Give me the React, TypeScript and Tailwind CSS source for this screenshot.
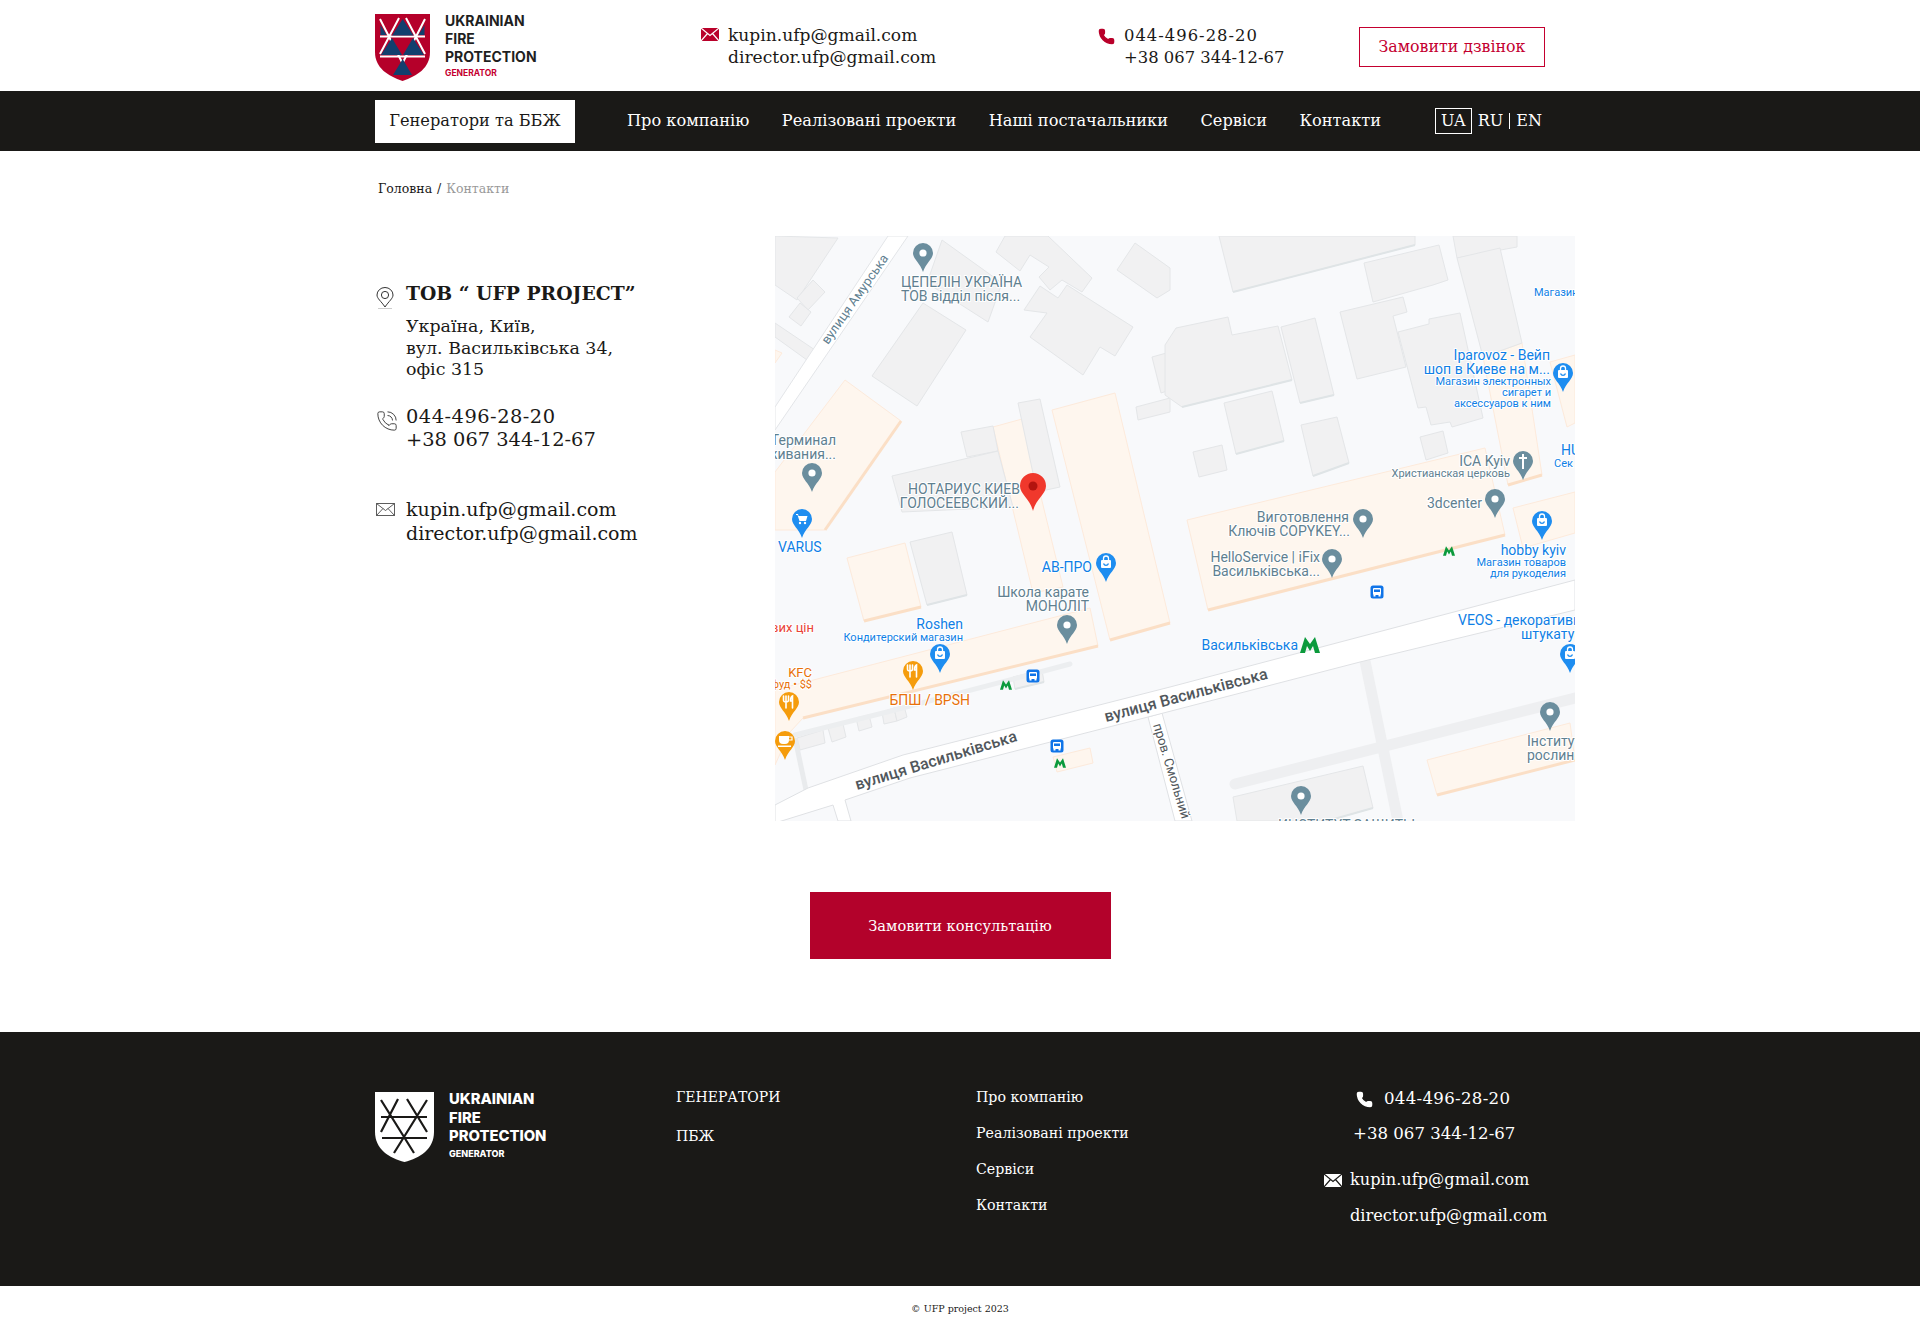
import { Phone, PhoneCall } from 'lucide-react';

const serif = 'font-["DejaVu_Serif",serif]';

type Label = [string, number, number, 'start' | 'end', number, string];

const GRAY = '#5f8090';
const BLUE = '#0f7fe6';
const ORANGE = '#e8710a';

const buildings = [
  '775,236 838,238 797,300 775,285',
  '797,298 813,280 825,292 808,310',
  '789,317 800,303 811,312 801,326',
  '775,323 815,350 807,360 775,337',
  '923,303 966,330 917,406 872,376',
  '942,240 1002,283 988,322 927,283',
  '1005,236 1048,236 1092,278 1082,292 1062,280 1050,290 1039,277 1049,267 1030,255 1020,271 996,252',
  '1135,243 1170,268 1170,290 1157,298 1117,270',
  '1067,285 1133,327 1115,356 1100,347 1083,375 1030,337 1047,313 1024,310 1040,286 1058,298',
  '1152,357 1170,352 1170,390 1161,393',
  '1136,407 1170,398 1170,412 1138,420',
  '1018,403 1040,399 1060,487 1037,492',
  '961,432 993,426 998,451 967,457',
  '892,476 998,451 1013,507 902,512',
  '1219,236 1415,236 1415,245 1233,292',
  '1364,263 1439,245 1448,280 1433,285 1373,302',
  '1453,236 1517,236 1517,247 1457,258',
  '1457,258 1500,248 1522,343 1483,357',
  '1340,312 1403,297 1407,312 1393,316 1406,367 1357,379',
  '1398,332 1429,324 1429,319 1460,313 1483,418 1452,427 1450,422 1431,425 1426,407 1418,408',
  '1176,328 1228,317 1232,335 1278,326 1292,380 1182,407 1165,395 1165,345',
  '1281,327 1315,318 1334,395 1300,403',
  '1224,403 1272,391 1284,441 1236,454',
  '1301,425 1337,417 1349,463 1313,476',
  '1193,452 1222,445 1227,470 1199,477',
  '1420,437 1443,431 1448,453 1426,460',
  '910,542 952,532 967,595 927,605',
  '797,738 823,730 825,743 800,750',
  '828,728 843,724 846,737 832,742',
  '856,718 869,715 872,727 859,731',
  '882,712 894,708 897,721 884,724',
  '894,708 904,706 907,717 897,721',
  '1013,677 1042,670 1044,682 1015,689',
  '1233,797 1363,766 1373,808 1327,821 1237,821',
];

const peach = [
  '775,472 845,380 901,421 825,530 775,530',
  '775,350 782,353 775,363',
  '1052,410 1115,393 1170,623 1110,640',
  '993,427 1022,419 1063,587 1033,593',
  '847,558 905,543 921,607 864,621',
  '775,690 1090,608 1098,646 803,718 790,732 775,765',
  '1187,520 1485,448 1505,535 1208,610',
  '1483,357 1522,343 1542,475 1508,485',
  '1513,508 1575,492 1575,533 1523,548',
  '1550,362 1575,355 1575,423 1567,427',
  '1427,760 1570,723 1575,760 1437,795',
  '1053,757 1090,748 1093,763 1057,772',
];

// нижние грани: у участков персиковые, у зданий серые
const peachEdges = ['1208,610 1505,535', '803,718 1098,646', '825,530 901,421', '864,621 921,607', '1110,640 1170,623', '1508,485 1542,475', '1437,795 1575,760'];
const buildingEdges = ['1182,407 1292,380', '1236,454 1284,441', '1313,476 1349,463', '1300,403 1334,395', '927,605 967,595', '1015,689 1044,682', '1233,292 1415,245', '1327,821 1373,808'];

const labels: Label[] = [
  ['ЦЕПЕЛІН УКРАЇНА', 901, 287, 'start', 14, GRAY],
  ['ТОВ відділ після...', 901, 301, 'start', 14, GRAY],
  ['Терминал', 836, 445, 'end', 14, GRAY],
  ['живания...', 836, 459, 'end', 14, GRAY],
  ['НОТАРИУС КИЕВ', 1020, 494, 'end', 14, GRAY],
  ['ГОЛОСЕЕВСКИЙ...', 1019, 508, 'end', 14, GRAY],
  ['Школа карате', 1089, 597, 'end', 14, GRAY],
  ['МОНОЛІТ', 1089, 611, 'end', 14, GRAY],
  ['Виготовлення', 1349, 522, 'end', 14, GRAY],
  ['Ключів COPYKEY...', 1350, 536, 'end', 14, GRAY],
  ['HelloService | iFix', 1320, 562, 'end', 14, GRAY],
  ['Васильківська...', 1320, 576, 'end', 14, GRAY],
  ['ICA Kyiv', 1510, 466, 'end', 14, GRAY],
  ['Христианская церковь', 1510, 477, 'end', 11, GRAY],
  ['3dcenter', 1482, 508, 'end', 14, GRAY],
  ['Інститут', 1527, 746, 'start', 14, GRAY],
  ['рослин', 1527, 760, 'start', 14, GRAY],
  ['ИНСТИТУТ ЗАЩИТЫ', 1278, 830, 'start', 14, GRAY],
  ['VARUS', 778, 552, 'start', 14, BLUE],
  ['АВ-ПРО', 1092, 572, 'end', 14, BLUE],
  ['Roshen', 963, 629, 'end', 14, BLUE],
  ['Кондитерский магазин', 963, 641, 'end', 11, BLUE],
  ['Iparovoz - Вейп', 1550, 360, 'end', 14, BLUE],
  ['шоп в Киеве на м...', 1550, 374, 'end', 14, BLUE],
  ['Магазин электронных', 1551, 385, 'end', 11, BLUE],
  ['сигарет и', 1551, 396, 'end', 11, BLUE],
  ['аксессуаров к ним', 1551, 407, 'end', 11, BLUE],
  ['Магазин', 1534, 296, 'start', 11, BLUE],
  ['HU', 1561, 455, 'start', 14, BLUE],
  ['Сек', 1554, 467, 'start', 11, BLUE],
  ['hobby kyiv', 1566, 555, 'end', 14, BLUE],
  ['Магазин товаров', 1566, 566, 'end', 11, BLUE],
  ['для рукоделия', 1566, 577, 'end', 11, BLUE],
  ['VEOS - декоративн', 1458, 625, 'start', 14, BLUE],
  ['штукатур', 1521, 639, 'start', 14, BLUE],
  ['Васильківська', 1298, 650, 'end', 14, BLUE],
  ['вих цін', 814, 632, 'end', 13, '#ea4335'],
  ['KFC', 812, 677, 'end', 13, ORANGE],
  ['Фастфуд • $$', 812, 688, 'end', 11, ORANGE],
  ['БПШ / BPSH', 970, 705, 'end', 14, ORANGE],
];

function Pin({ x, y, color, kind }: { x: number; y: number; color: string; kind: 'dot' | 'bag' | 'cart' | 'food' | 'cup' | 'cross' }) {
  return (
    <g transform={`translate(${x} ${y})`}>
      <path d="M-10 0A10 10 0 1 1 10 0C10 6 3 10 0 19C-3 10-10 6-10 0Z" fill={color} />
      {kind === 'dot' && <circle r="3.6" fill="#fff" />}
      {kind === 'bag' && (
        <g fill="none" stroke="#fff" strokeWidth="1.3">
          <rect x="-5" y="-3" width="10" height="8" rx="1" fill="#fff" stroke="none" />
          <path d="M-2.5-3V-4.5A2.5 2.5 0 0 1 2.5-4.5V-3" />
          <path d="M-2.5 0.5C-1.5 3 1.5 3 2.5 0.5" stroke={color} />
        </g>
      )}
      {kind === 'cart' && (
        <g fill="#fff">
          <path d="M-6-5H-4L-3.5-3H5.5L4 2H-2.5L-4.5-4H-6Z" />
          <circle cx="-2" cy="4" r="1.2" />
          <circle cx="3" cy="4" r="1.2" />
        </g>
      )}
      {kind === 'food' && (
        <g fill="none" stroke="#fff" strokeWidth="1.6" strokeLinecap="round">
          <path d="M-3-6V6M-5.5-6V-2Q-5.5 0-3 0Q-.5 0-.5-2V-6" />
          <path d="M3.5 6V-6Q1.5-5 1.5-1H3.5" />
        </g>
      )}
      {kind === 'cup' && (
        <g fill="#fff">
          <path d="M-6-5H4V-1A4 4 0 0 1 0 3H-2A4 4 0 0 1-6-1Z" />
          <rect x="-7" y="4.5" width="13" height="1.5" />
          <path d="M4-4H7V-1H4" fill="none" stroke="#fff" strokeWidth="1.2" />
        </g>
      )}
      {kind === 'cross' && <path d="M0-7V8M-4-3H4" stroke="#fff" strokeWidth="2" fill="none" />}
    </g>
  );
}

function Metro({ x, y, s = 1 }: { x: number; y: number; s?: number }) {
  return (
    <g transform={`translate(${x} ${y}) scale(${s})`}>
      <path d="M-10 8L-5-8L0-1L5-8L10 8H5L3 1L0 6L-3 1L-5 8Z" fill="#0b9a3c" />
    </g>
  );
}

function Bus({ x, y }: { x: number; y: number }) {
  return (
    <g transform={`translate(${x} ${y})`}>
      <rect x="-6.5" y="-6.5" width="13" height="13" rx="2.5" fill="#0f74e8" />
      <rect x="-4" y="-4" width="8" height="7" rx="1" fill="#fff" />
      <rect x="-3" y="-2.5" width="6" height="2.5" fill="#0f74e8" />
      <rect x="-3.5" y="3" width="2" height="1.5" fill="#fff" />
      <rect x="1.5" y="3" width="2" height="1.5" fill="#fff" />
    </g>
  );
}

function GoogleMap() {
  return (
    <svg viewBox="775 236 800 585" className='block w-[800px] h-[585px] shrink-0 overflow-hidden font-["Roboto",sans-serif]'>
      <rect x="775" y="236" width="800" height="585" fill="#f8f9fb" />
      {peach.map((p) => (
        <polygon key={p} points={p} fill="#fef6ee" stroke="#fdeadb" strokeWidth="1" />
      ))}
      {peachEdges.map((p) => (
        <polyline key={p} points={p} fill="none" stroke="#fbdfc6" strokeWidth="3" />
      ))}
      {buildings.map((p) => (
        <polygon key={p} points={p} fill="#f1f1f2" stroke="#e4e6e8" strokeWidth="1" />
      ))}
      {buildingEdges.map((p) => (
        <polyline key={p} points={p} fill="none" stroke="#dfe4e6" strokeWidth="2" />
      ))}
      <path d="M795 735L887 712L1040 672L1070 664" fill="none" stroke="#eceef0" strokeWidth="5" strokeLinecap="round" />
      <path d="M795 738L806 790" fill="none" stroke="#e9ebed" strokeWidth="5" />
      <path d="M1235 784L1575 698" fill="none" stroke="#eeeff1" strokeWidth="11" strokeLinecap="round" />
      <path d="M1365 661L1398 821" fill="none" stroke="#eeeff1" strokeWidth="11" />
      {/* дороги */}
      <polygon points="888,236 908,236 775,430 775,407" fill="#fff" stroke="#e3e5e8" strokeWidth="1" />
      <polygon points="1148,717 1162,713 1192,821 1175,821" fill="#fff" stroke="#dfe1e4" strokeWidth="1" />
      <polygon points="775,805 808,788 903,755 1170,687 1575,580 1575,610 1360,662 1148,717 910,778 845,800 851,821 838,821 833,805 775,823" fill="#fff" stroke="#dfe1e4" strokeWidth="1" />
      <g className="[paint-order:stroke]" stroke="#fff" strokeWidth="2" strokeLinejoin="round">
        {labels.map(([text, x, y, anchor, size, color]) => (
          <text key={text + x} x={x} y={y} textAnchor={anchor} fontSize={size} fill={color}>
            {text}
          </text>
        ))}
        <text transform="translate(828 345) rotate(-55)" fontSize="13" fill={GRAY}>вулиця Амурська</text>
        <text transform="translate(857 790) rotate(-17)" fontSize="16" fontWeight="500" fill="#51575c">вулиця Васильківська</text>
        <text transform="translate(1106 722) rotate(-15)" fontSize="16" fontWeight="500" fill="#51575c">вулиця Васильківська</text>
        <text transform="translate(1153 725) rotate(73)" fontSize="13" fill="#51575c">пров. Смольний</text>
      </g>
      {[
        [923, 253], [812, 473], [1495, 499], [1363, 519], [1067, 625], [1332, 559], [1550, 712], [1301, 796],
      ].map(([x, y]) => (
        <Pin key={x} x={x} y={y} color="#6b8e9e" kind="dot" />
      ))}
      <Pin x={1523} y={461} color="#6b8e9e" kind="cross" />
      <Pin x={802} y={519} color="#1e8df0" kind="cart" />
      <Pin x={1106} y={563} color="#1e8df0" kind="bag" />
      <Pin x={940} y={654} color="#1e8df0" kind="bag" />
      <Pin x={1563} y={373} color="#1e8df0" kind="bag" />
      <Pin x={1542} y={521} color="#1e8df0" kind="bag" />
      <Pin x={1570} y={654} color="#1e8df0" kind="bag" />
      <Pin x={913} y={671} color="#f59c0c" kind="food" />
      <Pin x={789} y={702} color="#f59c0c" kind="food" />
      <Pin x={785} y={741} color="#f59c0c" kind="cup" />
      <Metro x={1310} y={645} />
      <Metro x={1449} y={551} s={0.6} />
      <Metro x={1006} y={685} s={0.6} />
      <Metro x={1060} y={763} s={0.6} />
      <Bus x={1033} y={676} />
      <Bus x={1057} y={746} />
      <Bus x={1377} y={592} />
      <g transform="translate(1033 486)">
        <path d="M-13 0A13 13 0 1 1 13 0C13 8 3 13 0 25C-3 13-13 8-13 0Z" fill="#f0382c" />
        <circle r="4.5" fill="#b3140f" />
      </g>
    </svg>
  );
}

function RedShield() {
  return (
    <svg viewBox="0 0 55 67" className="w-[55px] h-[67px] shrink-0 mt-[4px]">
      <path d="M0 0H55V38C55 54 42 62 27.5 67C13 62 0 54 0 38Z" fill="#b5002a" />
      <g stroke="#fff" strokeWidth="2" fill="none">
        <path d="M5 22.5H50M5 42.5H50" />
        <path d="M5 5L33 60M50 5L22 60M24 4L5 40M31 4L50 40" />
      </g>
      <g fill="#123f6e">
        <path d="M27.7 5L38.5 21.5H17Z" />
        <path d="M17 24L27 41H6Z" />
        <path d="M38 24L49 41H28Z" />
        <path d="M27.7 45L37 61H18Z" />
        <path d="M5.5 11L11.5 21H5.5Z" />
        <path d="M49.5 11L43.5 21H49.5Z" />
      </g>
    </svg>
  );
}

function WhiteShield() {
  return (
    <svg viewBox="0 0 59 70" className="w-[59px] h-[70px] shrink-0">
      <path d="M0 0H59V40C59 57 45 66 29.5 70C14 66 0 57 0 40Z" fill="#fff" />
      <g stroke="#1a1917" strokeWidth="2.2" fill="none">
        <path d="M6 25H52M7 46H52" />
        <path d="M6 8L39 61M52 8L19 61M23 7L6 40M32 7L52 40" />
      </g>
    </svg>
  );
}

function HeaderLogo() {
  return (
    <div className="flex items-center gap-[15px] w-[326px]">
      <RedShield />
      <div className='font-["Inter",sans-serif] font-bold text-[#1f1f1f] text-[14px] leading-[18px] mt-[2px]'>
        <p>UKRAINIAN</p>
        <p>FIRE</p>
        <p>PROTECTION</p>
        <p className="text-[8.5px] leading-[15px] text-[#c4002f]">GENERATOR</p>
      </div>
    </div>
  );
}

function MailSolid({ fill, line }: { fill: string; line: string }) {
  return (
    <svg viewBox="0 0 18 13" className="w-[18px] h-[13px] shrink-0">
      <rect width="18" height="13" fill={fill} />
      <path d="M0 0L9 7.5L18 0M0 13L6.5 5.5M18 13L11.5 5.5" stroke={line} strokeWidth="1.2" fill="none" />
    </svg>
  );
}

const navLinks = ['Про компанію', 'Реалізовані проекти', 'Наші постачальники', 'Сервіси', 'Контакти'];
const footerLinks = ['Про компанію', 'Реалізовані проекти', 'Сервіси', 'Контакти'];

export default function App() {
  return (
    <div className={`${serif} bg-white text-[#1a1917] min-h-[1329px]`}>
      {/* шапка */}
      <header className="w-[1170px] h-[91px] mx-auto flex items-center">
        <HeaderLogo />
        <div className="w-[397px] flex gap-[9px] items-start text-[17.1px] leading-[22px]">
          <div className="pt-[4px]">
            <MailSolid fill="#b9002a" line="#fff" />
          </div>
          <div>
            <p>kupin.ufp@gmail.com</p>
            <p>director.ufp@gmail.com</p>
          </div>
        </div>
        <div className="w-[261px] flex gap-[9px] items-start text-[16.4px] leading-[22px] mt-[3px]">
          <Phone className="w-[17px] h-[17px] mt-[3px] text-[#b9002a] fill-[#b9002a]" />
          <div>
            <p className="tracking-[1px]">044-496-28-20</p>
            <p>+38 067 344-12-67</p>
          </div>
        </div>
        <button className="w-[186px] h-[40px] mt-[3px] border-[1.5px] border-[#c4002f] text-[#c4002f] text-[15.8px]">Замовити дзвінок</button>
      </header>

      {/* меню */}
      <nav className="bg-[#1a1917] h-[60px]">
        <div className="w-[1170px] h-full mx-auto flex items-center text-white text-[16.2px]">
          <a className="w-[200px] h-[43px] bg-white text-[#1a1917] flex items-center justify-center mr-[52px]">Генератори та ББЖ</a>
          <div className="flex gap-[32.5px]">
            {navLinks.map((l) => (
              <a key={l}>{l}</a>
            ))}
          </div>
          <div className="ml-auto mr-[3px] flex items-center text-[16px]">
            <span className="w-[37px] h-[26px] border border-white flex items-center justify-center mr-[6px]">UA</span>
            <span>RU</span>
            <span className="w-px h-[16px] bg-white mx-[6px]" />
            <span>EN</span>
          </div>
        </div>
      </nav>

      <main className="w-[1170px] mx-auto">
        <div className="pt-[28px] pl-[3px] h-[85px] text-[12.5px] leading-[20px]">
          <span>Головна</span>
          <span className="mx-[5px]">/</span>
          <span className="text-[#999]">Контакти</span>
        </div>

        <div className="flex">
          <div className="w-[400px] shrink-0 pt-[43px]">
            <div className="flex">
              <div className="w-[31px] shrink-0 pl-[1px] pt-[8px]">
                <svg viewBox="0 0 18 22" className="w-[18px] h-[22px]">
                  <path d="M9 20C5 14 1 11.5 1 8A8 7.5 0 0 1 17 8C17 11.5 13 14 9 20Z" fill="none" stroke="#333" strokeWidth="1" />
                  <circle cx="9" cy="8" r="3.6" fill="none" stroke="#333" strokeWidth="1" />
                  <path d="M2 21.5H16" stroke="#ccc" strokeWidth="1" />
                </svg>
              </div>
              <div>
                <h2 className="text-[18.8px] leading-[28px] font-bold">ТОВ “ UFP PROJECT”</h2>
                <p className="mt-[9px] text-[17.4px] leading-[21.5px]">
                  Україна, Київ,
                  <br />
                  вул. Васильківська 34,
                  <br />
                  офіс 315
                </p>
              </div>
            </div>
            <div className="flex mt-[24px]">
              <div className="w-[31px] shrink-0 pl-[1px] pt-[5px]">
                <PhoneCall strokeWidth={1} className="w-[22px] h-[22px] text-[#333]" />
              </div>
              <p className="text-[19.4px] leading-[23.5px]">
                <span className="tracking-[.5px]">044-496-28-20</span>
                <br />
                +38 067 344-12-67
              </p>
            </div>
            <div className="flex mt-[45px]">
              <div className="w-[31px] pl-[1px] pt-[6px] shrink-0">
                <svg viewBox="0 0 19 13" className="w-[19px] h-[13px]">
                  <path d="M.5.5H18.5V12.5H.5ZM.5.5L9.5 7.5L18.5.5M.5 12.5L7 5.5M18.5 12.5L12 5.5" fill="none" stroke="#333" strokeWidth=".8" />
                </svg>
              </div>
              <p className="text-[19px] leading-[24px]">
                kupin.ufp@gmail.com
                <br />
                director.ufp@gmail.com
              </p>
            </div>
          </div>
          <GoogleMap />
        </div>

        <div className="flex justify-center pt-[71px] pb-[73px]">
          <button className="w-[301px] h-[67px] bg-[#b3022b] text-white text-[14.6px]">Замовити консультацію</button>
        </div>
      </main>

      {/* подвал */}
      <footer className="bg-[#1a1917] h-[254px] text-white">
        <div className="w-[1170px] mx-auto flex">
          <div className="w-[301px] shrink-0 pt-[60px] flex gap-[15px] items-start">
            <WhiteShield />
            <div className='font-["Inter",sans-serif] font-extrabold text-[14.8px] leading-[18.5px] -mt-[2px]'>
              <p>UKRAINIAN</p>
              <p>FIRE</p>
              <p>PROTECTION</p>
              <p className="text-[9px] leading-[16px]">GENERATOR</p>
            </div>
          </div>
          <div className="w-[300px] shrink-0 pt-[53px] text-[14px] leading-[24px] space-y-[15px]">
            <p>ГЕНЕРАТОРИ</p>
            <p>ПБЖ</p>
          </div>
          <div className="w-[348px] shrink-0 pt-[53px] text-[14.2px] leading-[24px] space-y-[12px]">
            {footerLinks.map((l) => (
              <p key={l}>{l}</p>
            ))}
          </div>
          <div className="shrink-0 pt-[55px] text-[16.6px] leading-[24px]">
            <div className="flex items-center ml-[32px] h-[24px]">
              <Phone className="w-[17px] h-[17px] fill-white text-white mr-[11px]" />
              <span className="tracking-[.3px]">044-496-28-20</span>
            </div>
            <p className="ml-[29px] mt-[11px]">+38 067 344-12-67</p>
            <div className="flex items-center mt-[22px] text-[16.2px]">
              <MailSolid fill="#fff" line="#1a1917" />
              <span className="ml-[8px]">kupin.ufp@gmail.com</span>
            </div>
            <p className="ml-[26px] mt-[12px] text-[16.2px]">director.ufp@gmail.com</p>
          </div>
        </div>
      </footer>

      <div className="h-[43px] pt-[3px] flex items-center justify-center text-[9.5px]">© UFP project 2023</div>
    </div>
  );
}
